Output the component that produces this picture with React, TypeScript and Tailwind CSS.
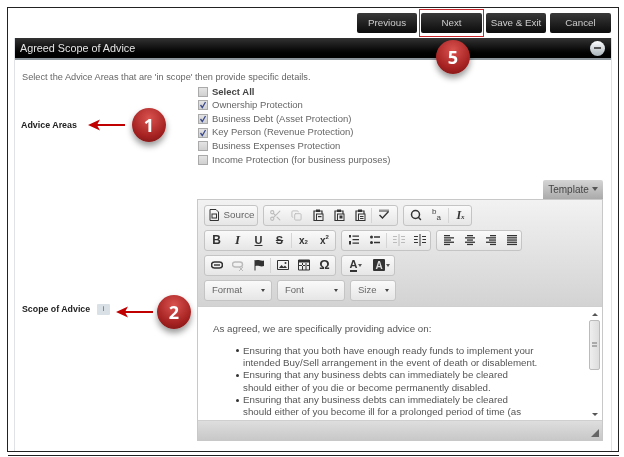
import React from "react";
import { Scissors, Copy, Search } from "lucide-react";

// small CKEditor-style toolbar glyphs, 12x12 box
const Svg = ({ children, dim }: { children: React.ReactNode; dim?: boolean }) => (
  <svg width="12" height="12" viewBox="0 0 12 12" className={dim ? "text-[#bbb]" : "text-[#333]"} fill="currentColor">
    {children}
  </svg>
);

const Paste = ({ mark }: { mark: React.ReactNode }) => (
  <Svg>
    <path d="M2 2h8v9.500H2z" fill="none" stroke="currentColor" strokeWidth="1.2" />
    <rect x="4" y="0.500" width="4" height="2.500" />
    <rect x="4.500" y="5" width="6.500" height="6.500" fill="#eee" stroke="currentColor" />
    {mark}
  </Svg>
);

const Lines = ({ rows }: { rows: number[][] }) => (
  <Svg>
    {rows.map(([x, w], i) => (
      <rect key={i} x={x} y={1 + i * 2.2} width={w} height="1.3" />
    ))}
  </Svg>
);

const Sep = () => <span className="mx-px h-[15px] w-px shrink-0 bg-[#d5d5d5]" />;

// one toolbar button slot
const Cell = ({ children, className = "" }: { children: React.ReactNode; className?: string }) => (
  <span className={`flex h-full w-[21px] shrink-0 items-center justify-center ${className}`}>{children}</span>
);

const Group = ({ children, className = "" }: { children: React.ReactNode; className?: string }) => (
  <div className={`flex h-[21px] items-center rounded-[3px] border border-[#c4c4c4] bg-gradient-to-b from-[#fafafa] to-[#e6e6e6] pl-px ${className}`}>
    {children}
  </div>
);

const Combo = ({ label, className }: { label: string; className: string }) => (
  <div className={`flex h-[21px] items-center justify-between rounded-[3px] border border-[#c4c4c4] bg-gradient-to-b from-[#fafafa] to-[#e6e6e6] pl-[7px] pr-[6px] text-[9.500px] text-[#666] ${className}`}>
    {label}
    <span className="h-0 w-0 border-x-[2.500px] border-t-[3px] border-x-transparent border-t-[#444]" />
  </div>
);

const Badge = ({ n, className }: { n: number; className: string }) => (
  <div className={`absolute flex h-[34px] w-[34px] items-center justify-center rounded-full bg-[radial-gradient(circle_at_50%_30%,#d9534f,#a32020_65%,#6e1212)] font-['Open_Sans',sans-serif] text-[18px] font-bold text-white shadow-[0_4px_6px_rgba(0,0,0,0.4)] ${className}`}>
    {n}
  </div>
);

const Arrow = ({ className }: { className: string }) => (
  <svg className={`absolute ${className}`} width="37" height="12" viewBox="0 0 37 12" fill="#c00000">
    <path d="M0 6 12 0.500 9.500 5H37V7H9.500L12 11.500z" />
  </svg>
);

const Bullet = ({ children }: { children: React.ReactNode }) => (
  <li className="relative before:absolute before:left-[-7px] before:top-[4.500px] before:h-[3px] before:w-[3px] before:rounded-full before:bg-[#333]">
    {children}
  </li>
);

const areas = [
  { name: "Select All", bold: true, on: false },
  { name: "Ownership Protection", on: true },
  { name: "Business Debt (Asset Protection)", on: true },
  { name: "Key Person (Revenue Protection)", on: true },
  { name: "Business Expenses Protection", on: false },
  { name: "Income Protection (for business purposes)", on: false },
];

const navButtons = [
  { name: "Previous", w: "w-[60px]" },
  { name: "Next", w: "w-[61px]" },
  { name: "Save & Exit", w: "w-[60px]" },
  { name: "Cancel", w: "w-[61px]" },
];

export default function App() {
  return (
    <div className="relative h-[457px] w-[624px] overflow-hidden bg-white font-['Liberation_Sans',Arial,sans-serif] blur-[0.35px]">
      {/* Frame */}
      <div className="ml-[7px] mt-[7px] h-[445px] w-[612px] border border-[#222] px-[6px] pt-[5px]">
        {/* Nav buttons */}
        <div className="flex justify-end gap-[4px] pr-[1px]">
          {navButtons.map((b) => (
            <div
              key={b.name}
              className={`flex h-[20px] items-center justify-center rounded-[2px] bg-gradient-to-b from-[#3a3a3a] to-[#0c0c0c] text-[9.800px] text-[#ccc] ${b.w}`}
            >
              {b.name}
            </div>
          ))}
        </div>

        {/* Panel */}
        <div className="mt-[5px] flex h-[413px] flex-col border-x border-[#dfe3e6]">
          <div className="flex h-[20px] shrink-0 items-center justify-between bg-gradient-to-b from-[#333] via-[#111] to-black pl-[5px] pr-[6px] text-[10.800px] text-[#e4e4e4]">
            Agreed Scope of Advice
            <span className="flex h-[15px] w-[15px] items-center justify-center rounded-full bg-gradient-to-b from-white to-[#aab4bb]">
              <span className="h-[2px] w-[7px] bg-[#555]" />
            </span>
          </div>
          <div className="h-[2px] shrink-0 bg-[#8d979d]" />

          <p className="ml-[7px] mt-[11px] text-[9.200px] leading-[12px] text-[#666]">
            Select the Advice Areas that are 'in scope' then provide specific details.
          </p>

          {/* Advice Areas */}
          <div className="mt-[2px] flex items-center">
            <div className="w-[183px] pl-[6px] text-[8.900px] font-bold text-[#222]">Advice Areas</div>
            <div className="flex flex-col">
              {areas.map((a) => (
                <label key={a.name} className="flex h-[13.600px] items-center gap-[4px] text-[9.500px] text-[#666]">
                  <span className="flex h-[10px] w-[10px] items-center justify-center border border-[#aaa] bg-gradient-to-b from-[#e4e4e4] to-[#d0d0d0]">
                    {a.on && (
                      <svg width="8" height="8" viewBox="0 0 8 8" fill="none" stroke="#3b4a8c" strokeWidth="1.3">
                        <path d="M1.500 4 3.300 6.500 6.500 1" />
                      </svg>
                    )}
                  </span>
                  <span className={a.bold ? "font-bold text-[#444]" : ""}>{a.name}</span>
                </label>
              ))}
            </div>
          </div>

          {/* Scope of Advice */}
          <div className="mt-[13px] flex">
            <div className="flex w-[182px] items-center gap-[7px] self-start pl-[7px] pt-[123px]">
              <span className="text-[8.800px] font-bold text-[#222]">Scope of Advice</span>
              <span className="flex h-[11px] w-[13px] items-center justify-center rounded-[1px] bg-[#d9e0e6] text-[7px] text-[#556]">i</span>
            </div>
            <div className="flex w-[407px] flex-col">
              <div className="flex h-[19px] w-[406px] justify-end">
                <div className="flex w-[60px] items-center justify-center gap-[3px] rounded-t-[2px] bg-gradient-to-b from-[#d5d5d5] to-[#aaa] text-[10px] text-[#444]">
                  Template
                  <span className="h-0 w-0 border-x-[3.500px] border-t-[4px] border-x-transparent border-t-[#555]" />
                </div>
              </div>

              {/* Editor */}
              <div className="flex h-[242px] w-[406px] flex-col border border-[#c8c8c8]">
                <div className="flex h-[106px] shrink-0 flex-col gap-[4px] bg-gradient-to-b from-[#f2f2f2] to-[#d2d3d2] pl-[6px] pt-[5px]">
                  <div className="flex gap-[5px]">
                    <Group className="w-[54px] justify-center gap-[3px] text-[9.800px] text-[#666]">
                      <Svg>
                        <path d="M2 .500h6l2.500 2.500v8.500H2z" fill="none" stroke="currentColor" />
                        <rect x="4" y="5" width="4.500" height="4" fill="none" stroke="currentColor" />
                      </Svg>
                      Source
                    </Group>
                    <Group className="w-[135px]">
                      <Cell><Scissors size={13} className="text-[#bbb]" /></Cell>
                      <Cell><Copy size={11} className="text-[#bbb]" /></Cell>
                      <Cell><Paste mark={<rect x="6" y="7" width="3.500" height="1.200" />} /></Cell>
                      <Cell><Paste mark={<rect x="6.500" y="6.500" width="3" height="3" />} /></Cell>
                      <Cell><Paste mark={<path d="M6 7h3.500v1H6zM6 9h3.500v1H6z" />} /></Cell>
                      <Sep />
                      <Cell>
                        <Svg>
                          <path d="M1 6.500 2 5.500 4.500 8 10 2l1 1-6.500 7z" />
                          <path d="M1 .500h10V3H1z" opacity=".5" />
                        </Svg>
                      </Cell>
                    </Group>
                    <Group className="w-[69px]">
                      <Cell><Search size={12} strokeWidth={3} className="text-[#333]" /></Cell>
                      <Cell className="text-[8px] text-[#444]">
                        <span className="flex h-[14px] items-stretch">
                          <span className="self-start leading-[8px]">b</span>
                          <span className="self-end leading-[8px]">a</span>
                        </span>
                      </Cell>
                      <Sep />
                      <Cell className="font-['Liberation_Serif',serif] text-[12px] font-bold italic text-[#333]">
                        I<span className="mt-[5px] text-[7px]">x</span>
                      </Cell>
                    </Group>
                  </div>

                  <div className="flex gap-[5px]">
                    <Group className="w-[132px] text-[#333]">
                      <Cell className="text-[12px] font-bold">B</Cell>
                      <Cell className="font-['Liberation_Serif',serif] text-[13px] font-bold italic">I</Cell>
                      <Cell className="text-[11px] font-bold underline">U</Cell>
                      <Cell className="text-[11px] font-bold line-through">S</Cell>
                      <Sep />
                      <Cell className="text-[10px] font-bold">x<span className="mt-[5px] text-[6px]">2</span></Cell>
                      <Cell className="text-[10px] font-bold">x<span className="mb-[5px] text-[6px]">2</span></Cell>
                    </Group>
                    <Group className="w-[90px]">
                      <Cell>
                        <Svg>
                          <path d="M1 1h2v2.500H1zM1 7h2v3.500H1zM4.500 1.500H11v1.300H4.500zM4.500 5H11v1.300H4.500zM4.500 8.500H11v1.300H4.500z" />
                        </Svg>
                      </Cell>
                      <Cell>
                        <Svg>
                          <circle cx="2.500" cy="3" r="1.500" />
                          <circle cx="2.500" cy="8.500" r="1.500" />
                          <path d="M5 2.300h6v1.500H5zM5 7.800h6v1.500H5z" />
                        </Svg>
                      </Cell>
                      <Sep />
                      <Cell>
                        <Svg dim>
                          <path d="M5.500 0h1v12h-1zM0 2h4v1H0zM8 2h4v1H8zM0 5h3.500v1H0zM8.500 5H12v1H8.500zM0 8h4v1H0zM8 8h4v1H8z" />
                        </Svg>
                      </Cell>
                      <Cell>
                        <Svg>
                          <path d="M5.500 0h1v12h-1zM0 2h4v1H0zM8 2h4v1H8zM0 5h3.500v1H0zM8.500 5H12v1H8.500zM0 8h4v1H0zM8 8h4v1H8z" />
                        </Svg>
                      </Cell>
                    </Group>
                    <Group className="w-[86px]">
                      <Cell><Lines rows={[[1, 6], [1, 10], [1, 7], [1, 10], [1, 6]]} /></Cell>
                      <Cell><Lines rows={[[3, 6], [1, 10], [3, 6], [1, 10], [3, 6]]} /></Cell>
                      <Cell><Lines rows={[[5, 6], [1, 10], [4, 7], [1, 10], [5, 6]]} /></Cell>
                      <Cell><Lines rows={[[1, 10], [1, 10], [1, 10], [1, 10], [1, 10]]} /></Cell>
                    </Group>
                  </div>

                  <div className="flex gap-[5px]">
                    <Group className="w-[132px] text-[#333]">
                      <Cell>
                        <Svg>
                          <path d="M3.500 3h5a3 3 0 0 1 0 6h-5a3 3 0 0 1 0-6z" fill="none" stroke="currentColor" strokeWidth="1.600" />
                          <rect x="3" y="5.300" width="6" height="1.400" />
                        </Svg>
                      </Cell>
                      <Cell>
                        <Svg dim>
                          <path d="M3 3h5a2.500 2.500 0 0 1 0 5H3a2.500 2.500 0 0 1 0-5z" fill="none" stroke="currentColor" strokeWidth="1.400" />
                          <path d="M7 8l4 4M11 8l-4 4" stroke="currentColor" />
                        </Svg>
                      </Cell>
                      <Cell>
                        <Svg>
                          <path d="M1.500 1h1v10.500h-1zM2.500 1.500c3-1.500 5 1 8.500 0v5.500c-3.500 1.300-5.500-1-8.500 0z" />
                        </Svg>
                      </Cell>
                      <Sep />
                      <Cell>
                        <Svg>
                          <path d="M.500 1.500h11v9H.500z" fill="none" stroke="currentColor" />
                          <path d="M2 9l2.500-3 2 2 1.500-1.500 2 2.500z" />
                          <circle cx="8.500" cy="4" r="1" />
                        </Svg>
                      </Cell>
                      <Cell>
                        <Svg>
                          <path d="M.500 1h11v10H.500z" fill="none" stroke="currentColor" />
                          <path d="M.500 1h11v2.500H.500zM4 3v8h1V3zM7.500 3v8h1V3zM.500 6h11v1H.500z" />
                        </Svg>
                      </Cell>
                      <Cell className="text-[13px] font-bold">Ω</Cell>
                    </Group>
                    <Group className="w-[54px] text-[#333]">
                      <Cell className="w-[26px] gap-[1px]">
                        <span className="border-b-2 border-[#333] text-[11px] font-bold leading-[11px]">A</span>
                        <span className="h-0 w-0 border-x-[2.500px] border-t-[3px] border-x-transparent border-t-[#555]" />
                      </Cell>
                      <Cell className="w-[25px] gap-[1px]">
                        <span className="flex h-[12px] w-[12px] items-center justify-center rounded-[1px] bg-[#333] text-[10px] font-bold text-[#ddd]">A</span>
                        <span className="h-0 w-0 border-x-[2.500px] border-t-[3px] border-x-transparent border-t-[#555]" />
                      </Cell>
                    </Group>
                  </div>

                  <div className="flex gap-[5px]">
                    <Combo label="Format" className="w-[68px]" />
                    <Combo label="Font" className="w-[68px]" />
                    <Combo label="Size" className="w-[46px]" />
                  </div>
                </div>

                {/* Content */}
                <div className="flex h-[115px] shrink-0 overflow-hidden border-y border-[#cfcfcf] bg-white">
                  <div className="flex-1 overflow-hidden pl-[15px] pt-[16px] text-[9.750px] leading-[12.300px] text-[#555]">
                    <p>As agreed, we are specifically providing advice on:</p>
                    <ul className="mt-[10px] pl-[30px]">
                      <Bullet>Ensuring that you both have enough ready funds to implement your<br />intended Buy/Sell arrangement in the event of death or disablement.</Bullet>
                      <Bullet>Ensuring that any business debts can immediately be cleared<br />should either of you die or become permanently disabled.</Bullet>
                      <Bullet>Ensuring that any business debts can immediately be cleared<br />should either of you become ill for a prolonged period of time (as</Bullet>
                    </ul>
                  </div>
                  <div className="mr-px flex w-[13px] flex-col items-center pb-[4px] pt-[6px]">
                    <span className="h-0 w-0 border-x-[3px] border-b-[3px] border-x-transparent border-b-[#555]" />
                    <div className="mt-[4px] flex h-[50px] w-[11px] items-center justify-center rounded-[2px] border border-[#bbb] bg-gradient-to-r from-[#eee] to-[#ddd]">
                      <span className="h-[5px] w-[5px] border-y-2 border-[#aaa]" />
                    </div>
                    <span className="mt-auto h-0 w-0 border-x-[3px] border-t-[3px] border-x-transparent border-t-[#555]" />
                  </div>
                </div>

                <div className="flex flex-1 items-end justify-end bg-gradient-to-b from-[#dedede] to-[#c8c8c8] pb-[3px] pr-[3px]">
                  <span className="h-0 w-0 border-b-[8px] border-l-[8px] border-b-[#666] border-l-transparent" />
                </div>
              </div>
            </div>
          </div>
        </div>
      </div>
      <div className="ml-[8px] mt-[3px] h-px w-[611px] bg-[#222]" />

      {/* Annotations */}
      <div className="absolute left-[419px] top-[9px] h-[28px] w-[65px] border-[1.500px] border-[#c8262a]" />
      <Badge n={5} className="left-[436px] top-[40px]" />
      <Badge n={1} className="left-[132px] top-[108px]" />
      <Badge n={2} className="left-[157px] top-[295px]" />
      <Arrow className="left-[88px] top-[119px]" />
      <Arrow className="left-[116px] top-[306px]" />
    </div>
  );
}
